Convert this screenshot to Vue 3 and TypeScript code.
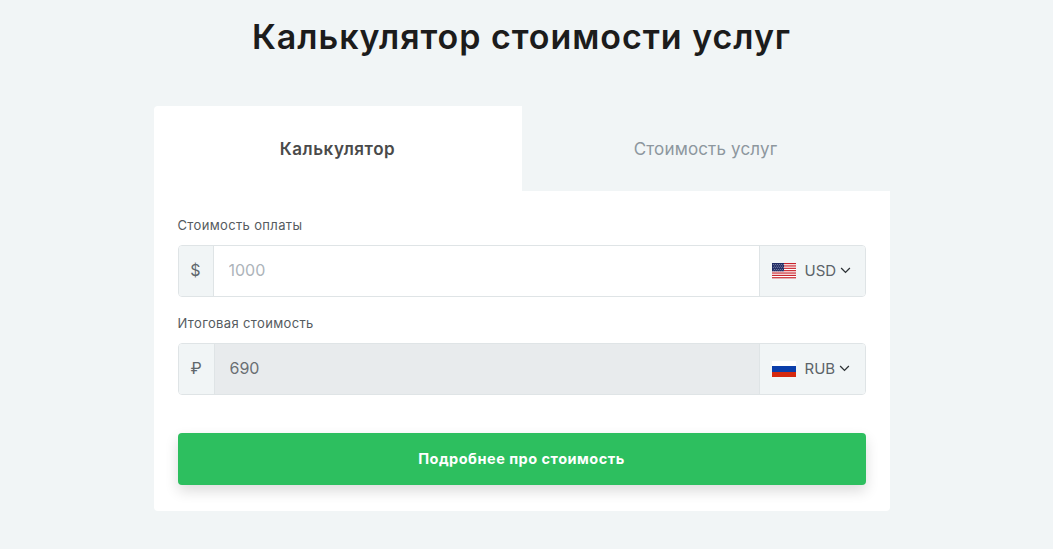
<script setup lang="ts">
const starRows: { x: number; y: number }[] = [];
for (let r = 0; r < 5; r++) {
  for (let c = 0; c < (r % 2 ? 5 : 6); c++) {
    starRows.push({ x: (r % 2 ? 1.9 : 0.9) + c * 2, y: 1 + r * 1.7 });
  }
}
const stripes = [0, 2, 4, 6, 8, 10, 12];
</script>

<template>
  <main class="page">
    <h1 class="title">Калькулятор стоимости услуг</h1>
    <section class="card">
      <div class="tabs">
        <div class="tab active">Калькулятор</div>
        <div class="tab">Стоимость услуг</div>
      </div>
      <form class="form" @submit.prevent>
        <label class="label">Стоимость оплаты</label>
        <div class="group">
          <span class="prefix">$</span>
          <input class="field" type="text" placeholder="1000" />
          <div class="currency">
            <svg class="flag" viewBox="0 0 24 16" width="24" height="16" aria-hidden="true">
              <rect width="24" height="15.34" fill="#fff" />
              <rect v-for="s in stripes" :key="s" y="0" :transform="`translate(0 ${s * 1.18})`" width="24" height="1.18" fill="#c8232c" />
              <rect width="12" height="8.3" fill="#1f2a63" />
              <rect v-for="(p, i) in starRows" :key="i" :x="p.x" :y="p.y" width="0.7" height="0.7" fill="#e6e9f2" />
            </svg>
            <span class="code">USD</span>
            <svg class="chev" viewBox="0 0 12 8" width="11" height="7" aria-hidden="true">
              <path d="M1 1.2 6 6.2 11 1.2" fill="none" stroke="#2f3438" stroke-width="1.5" />
            </svg>
          </div>
        </div>
        <label class="label second">Итоговая стоимость</label>
        <div class="group">
          <span class="prefix rub">₽</span>
          <input class="field readonly" type="text" value="690" readonly />
          <div class="currency">
            <svg class="flag" viewBox="0 0 24 16" width="24" height="16" aria-hidden="true">
              <rect width="24" height="5" fill="#fff" />
              <rect y="5" width="24" height="6" fill="#0b3eaa" />
              <rect y="11" width="24" height="5" fill="#d5290f" />
            </svg>
            <span class="code">RUB</span>
            <svg class="chev" viewBox="0 0 12 8" width="11" height="7" aria-hidden="true">
              <path d="M1 1.2 6 6.2 11 1.2" fill="none" stroke="#2f3438" stroke-width="1.5" />
            </svg>
          </div>
        </div>
        <button class="submit" type="submit">Подробнее про стоимость</button>
      </form>
    </section>
  </main>
</template>

<style>
html,
body {
  margin: 0;
  background: #f1f5f6;
}
</style>

<style scoped>
.page {
  display: flex;
  flex-direction: column;
  align-items: center;
  font-family: Inter, "Noto Sans", sans-serif;
  min-height: 549px;
  box-sizing: border-box;
  padding-right: 10px;
}
.title {
  margin: 13px 0 46px;
  font-size: 34px;
  line-height: 47px;
  font-weight: 600;
  letter-spacing: 0.96px;
  color: #1c1c1c;
}
.card {
  width: 736px;
  border-radius: 4px;
  overflow: hidden;
}
.tabs {
  display: grid;
  grid-template-columns: 1fr 1fr;
}
.tab {
  height: 85px;
  display: flex;
  align-items: center;
  justify-content: center;
  font-size: 17px;
  letter-spacing: 0.15px;
  color: #8d979e;
}
.tab.active {
  background: #fff;
  color: #4a4a4a;
  font-weight: 600;
  letter-spacing: 0.55px;
}
.form {
  background: #fff;
  padding: 24px 24px 26px;
  display: flex;
  flex-direction: column;
}
.label {
  font-size: 13px;
  line-height: 20px;
  letter-spacing: 0.35px;
  color: #555b60;
  margin-bottom: 10px;
}
.label.second {
  margin-top: 16px;
}
.group {
  display: flex;
  height: 52px;
  box-sizing: border-box;
  border: 1px solid #dfe4e6;
  border-radius: 4px;
  overflow: hidden;
}
.prefix {
  width: 34px;
  flex: none;
  display: flex;
  align-items: center;
  justify-content: center;
  padding-bottom: 2px;
  box-sizing: content-box;
  background: #f1f5f6;
  border-right: 1px solid #dfe4e6;
  font-size: 16px;
  color: #5f676c;
}
.prefix.rub {
  width: 35px;
}
.field {
  flex: 1;
  min-width: 0;
  border: 0;
  outline: 0;
  padding: 0 15px 2px;
  font: inherit;
  font-size: 16px;
  color: #6a6f73;
  background: #fff;
}
.field::placeholder {
  color: #adb4ba;
  opacity: 1;
}
.field.readonly {
  background: #e8ebed;
}
.currency {
  width: 106px;
  flex: none;
  box-sizing: border-box;
  display: flex;
  align-items: center;
  padding-left: 12px;
  background: #f1f5f6;
  border-left: 1px solid #dfe4e6;
}
.flag {
  flex: none;
}
.code {
  margin: 0 0 2px 9px;
  font-size: 15px;
  color: #5c6369;
}
.chev {
  margin: 0 0 2px 4px;
  flex: none;
}
.submit {
  margin-top: 38px;
  height: 52px;
  border: 0;
  border-radius: 4px;
  padding: 0 0 2px;
  background: #2dbf5f;
  color: #fff;
  font: inherit;
  font-size: 14.5px;
  letter-spacing: 0.5px;
  font-weight: 700;
  box-shadow: 0 6px 14px rgba(0, 0, 0, 0.14);
}
</style>
